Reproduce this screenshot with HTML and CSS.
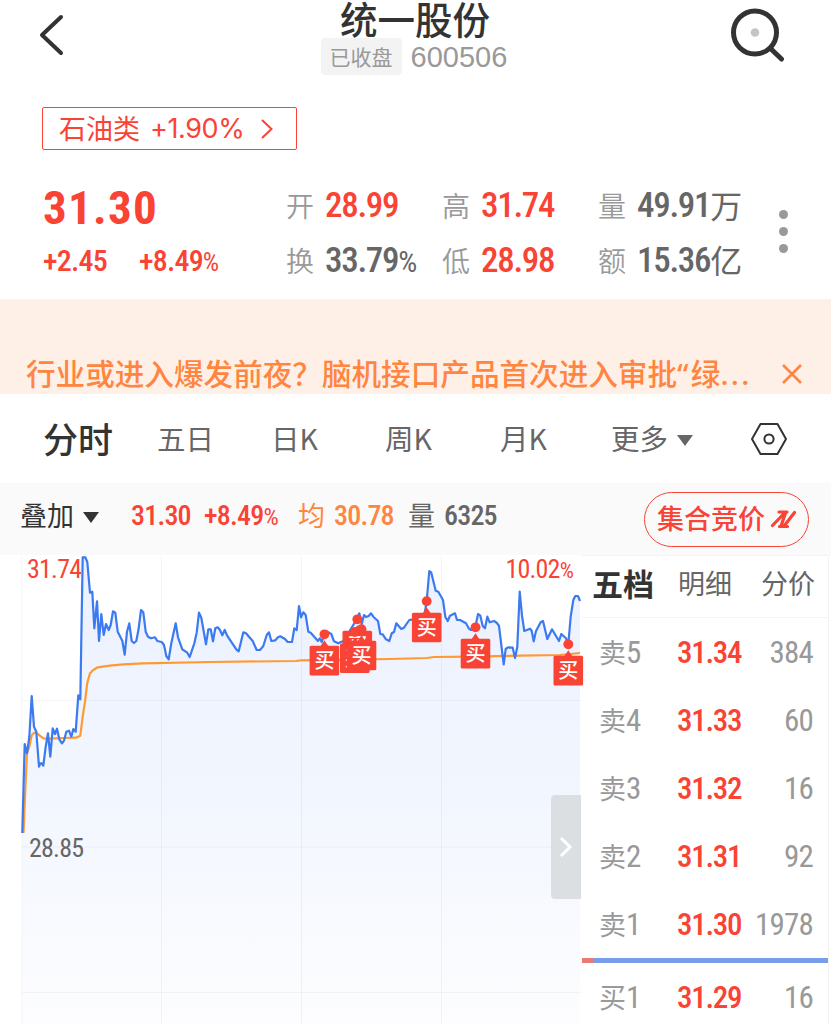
FILE: index.html
```html
<!DOCTYPE html>
<html lang="zh-CN">
<head>
    <meta charset="UTF-8">
    <meta name="viewport" content="width=device-width, initial-scale=1.0">
    <title>统一股份 600506</title>
    <link rel="stylesheet" href="styles.css">
</head>
<body>

    <!-- Header -->
    <header class="header">
        <svg class="back-icon" width="30" height="46" viewBox="0 0 30 46">
            <path d="M24 5 L5 23 L24 41" />
        </svg>
        <div class="stock-title">
            <h1>统一股份</h1>
            <div class="stock-sub">
                <span class="status-badge">已收盘</span>
                <span class="stock-code">600506</span>
            </div>
        </div>
        <svg class="search-icon" width="60" height="60" viewBox="0 0 60 60">
            <circle class="ring" cx="30" cy="29.5" r="21.5" />
            <path d="M46 46 L56.5 56" />
            <circle class="dot" cx="30" cy="29.5" r="4.3" />
        </svg>
    </header>

    <!-- Sector -->
    <div class="sector">
        <a class="sector-tag">
            <span class="sector-name">石油类</span>
            <span class="sector-rate">+1.90%</span>
            <svg width="14" height="20" viewBox="0 0 14 20"><path d="M2 1 L11.5 10 L2 19" /></svg>
        </a>
    </div>

    <!-- Quote -->
    <section class="quote">
        <div class="quote-price">
            <div class="num price">31.30</div>
            <div class="change"><span class="num">+2.45</span><span class="num">+8.49<span class="pct">%</span></span></div>
        </div>
        <div class="quote-grid">
            <div class="cell"><label>开</label><span class="num up">28.99</span></div>
            <div class="cell"><label>高</label><span class="num up">31.74</span></div>
            <div class="cell"><label>量</label><span class="num">49.91</span><span class="unit">万</span></div>
            <div class="cell"><label>换</label><span class="num">33.79<span class="pct">%</span></span></div>
            <div class="cell"><label>低</label><span class="num up">28.98</span></div>
            <div class="cell"><label>额</label><span class="num">15.36</span><span class="unit">亿</span></div>
        </div>
        <div class="more-dots"><i></i><i></i><i></i></div>
    </section>

    <!-- Notice -->
    <div class="notice">
        <span class="notice-text">行业或进入爆发前夜？脑机接口产品首次进入审批<span class="punct">“</span>绿<span class="punct">...</span></span>
        <svg width="20" height="20" viewBox="0 0 20 20"><path d="M1 1 L19 19 M19 1 L1 19" /></svg>
    </div>

    <!-- Period tabs -->
    <nav class="tabs">
        <span class="tab active">分时</span>
        <span class="tab">五日</span>
        <span class="tab">日K</span>
        <span class="tab">周K</span>
        <span class="tab">月K</span>
        <span class="tab">更多<i class="caret"></i></span>
        <svg width="38" height="34" viewBox="0 0 38 34">
            <path d="M10.5 2 H27.5 L36 17 L27.5 32 H10.5 L2 17 Z" />
            <circle cx="19" cy="17" r="4.6" />
        </svg>
    </nav>

    <!-- Indicator bar -->
    <div class="indicator">
        <span class="overlay-btn">叠加<i class="caret"></i></span>
        <span class="num up last">31.30</span>
        <span class="num up rate">+8.49<span class="pct">%</span></span>
        <span class="avg-label">均</span>
        <span class="num avg">30.78</span>
        <span class="vol-label">量</span>
        <span class="num vol">6325</span>
        <a class="auction-btn"><span>集合竞价</span>
            <svg width="26" height="20" viewBox="0 0 26 20">
                <path d="M2.5 16.5 L15 3.5 M9 3 H17 M15.5 4 L11 17 M9.5 17.5 H17.5 M14.5 16.5 L24.5 3.5" />
            </svg>
        </a>
    </div>

    <main class="main">
        <!-- Intraday chart -->
        <div class="chart">
            <svg width="584" height="469" viewBox="0 555 584 469">
                <defs>
                    <linearGradient id="area" x1="0" y1="556" x2="0" y2="1024" gradientUnits="userSpaceOnUse">
                        <stop offset="0" stop-color="#ebf1fe" />
                        <stop offset="0.5" stop-color="#f2f6fe" />
                        <stop offset="1" stop-color="#fdfdff" />
                    </linearGradient>
                    <g id="buy">
                        <circle r="4.9" />
                        <path d="M-4 12 L0 6 L4 12 Z" />
                        <rect x="-14.8" y="11.5" width="29.6" height="29.6" rx="1.5" />
                        <text y="33.5">买</text>
                    </g>
                </defs>
                <path class="price-area" id="priceArea" />
                <path class="grid-line" d="M22 556 V1024 M161.5 556 V1024 M301.5 556 V1024 M441.5 556 V1024 M22 700.5 H582 M22 847 H582 M22 992.5 H582" />
                <path class="avg-line" d="M23.5 833 L25.5 785 27 753 29.3 746.7 31.7 735 34.3 732.7 37 733.3 43.3 738.3 50 738.7 63.3 738 76 737.7 80.3 735.7 82.7 716.7 85 701.7 87.3 682.7 90 673.3 93.3 670 97.7 667.3 110 665.7 123.3 664.3 143 663.3 210 662 296 661 301 660.3 390 659 427 658 434 657 470 656.7 520 655.7 560 655 580 653" />
                <path class="price-line" id="priceLine" />
                <g class="buys">
                    <use href="#buy" x="324.4" y="634.3" />
                    <use href="#buy" x="357.3" y="619.3" />
                    <use href="#buy" x="354.8" y="632" />
                    <use href="#buy" x="361.5" y="629.2" />
                    <use href="#buy" x="426.7" y="601.2" />
                    <use href="#buy" x="475.5" y="627.3" />
                    <use href="#buy" x="568.3" y="644.3" />
                </g>
            </svg>
            <span class="num up label-high">31.74</span>
            <span class="num up label-rate">10.02<span class="pct">%</span></span>
            <span class="num label-base">28.85</span>
            <div class="drawer-handle">
                <svg width="14" height="22" viewBox="0 0 14 22"><path d="M2 2 L11 11 L2 20" /></svg>
            </div>
        </div>

        <!-- Order book -->
        <aside class="book">
            <div class="book-tabs"><span class="active">五档</span><span>明细</span><span>分价</span></div>
            <div class="row"><span class="level">卖<b class="num">5</b></span><span class="num up">31.34</span><span class="num qty">384</span></div>
            <div class="row"><span class="level">卖<b class="num">4</b></span><span class="num up">31.33</span><span class="num qty">60</span></div>
            <div class="row"><span class="level">卖<b class="num">3</b></span><span class="num up">31.32</span><span class="num qty">16</span></div>
            <div class="row"><span class="level">卖<b class="num">2</b></span><span class="num up">31.31</span><span class="num qty">92</span></div>
            <div class="row"><span class="level">卖<b class="num">1</b></span><span class="num up">31.30</span><span class="num qty">1978</span></div>
            <div class="ratio-bar"><i></i></div>
            <div class="row"><span class="level">买<b class="num">1</b></span><span class="num up">31.29</span><span class="num qty">16</span></div>
        </aside>
    </main>

    <script>
        // Price points, x y pairs
        const points = '22.3 833 24.7 744 27 753.3 29.3 737 31.7 696 34 726.7 36.3 731.7 39 766.7 40.3 763.3 41.7 763.3 43.3 765.7 45.7 746.7 48 733.3 50.3 756.7 52.7 728.3 55 734 57 728.7 59.3 739.3 62 743.3 64 740.7 66.3 731.7 69 730.7 71.3 736.7 73.3 729 75.7 731.7 78.3 695.3 80.3 699.3 82.7 557.3 85.3 557.3 87.3 562 90 592.7 92.3 591.7 94.3 628.3 97 601.3 99 641 101.3 614 103.7 635 106 624 108.7 630 110.7 625 113 611.3 115.3 612.7 117.7 631.7 122.3 640.7 124.7 654.7 127 631.7 129.3 623.3 131.7 641 134 643 136.3 641 138.7 628.3 141 610 143.3 612.3 145.7 631.7 148 636.7 151 638.3 155 637.3 157.3 641 161.7 642 164 645 166.3 656 168.7 659.3 171.3 643.3 175.7 623.3 178 637.3 182.3 649.3 187.3 652.7 189.7 657 194.3 643.3 196.7 632.7 199 612.7 201.3 617.7 206 644.3 208.3 629.3 210.7 629.3 213 641.3 215.3 628.3 217.7 627.3 220 630 222.3 635.3 224.7 630 227 635.3 236.3 649.3 238.7 651.3 243.3 632.3 246 633.3 252.7 641 256.7 650 260 650 263.3 646 266.7 635 269 632.3 271.3 641 275.3 640.3 278 637.3 280.3 636.3 285 639 287.7 642 292 642 294.3 628.3 296.7 630 299 606 301 617.3 303.3 612.3 305.7 615 308.3 631.7 310.7 632.7 318 641 319.7 638.3 321.7 642 324 635 327.3 631.7 331.3 634 334 641.3 338.3 643.3 343.3 641 348.3 633.3 356.7 619.3 359.3 613.3 361.7 624 364 615 366 617 368.7 616 371 613.3 373.3 616.7 378 621 380.3 634 382.7 634.3 386 639.3 389.3 641 391.7 633.3 394 632 396.3 623.3 401.3 629 404 627.7 409.3 620 413.3 619.3 424 618 426.7 601 429.3 571 431.3 572.7 435.7 590.7 438.3 591.7 443 600 445.3 616.7 447.7 621 450 615.7 455 613.3 457 620 460 620 466 623.3 468.7 628.3 471 630 475.3 627.3 478 614 480.3 615.7 482.7 626 485 628.3 487.3 616.7 489.7 622.3 494 621 496.7 622.7 499 626 503.7 664.3 505.7 649 508 647.3 512.7 647.7 515 658 517.3 646.7 519.7 591.7 522 615.7 524.3 631 530 628.7 531.7 631 533.7 641.3 536 631 540.7 622.3 543 621 547.3 639 552 629.3 559 641 561.3 634 566 638.3 568.3 644 570.7 616.7 573.3 600 575.3 596 578 596 580 601';

        document.getElementById('priceLine').setAttribute('d', 'M' + points);
        document.getElementById('priceArea').setAttribute('d', 'M' + points + ' V1024 H22.3 Z');
    </script>

</body>
</html>
```
FILE: styles.css
```css
* {
    box-sizing: border-box;
}

body {
    margin: 0;
    width: 831px;
    height: 1024px;
    overflow: hidden;
    background: #ffffff;
    color: #666666;
    font-family: "Noto Sans CJK SC", sans-serif;
    white-space: nowrap;
}

svg {
    display: block;
    fill: none;
}

i {
    display: block;
}

.num {
    font-family: Roboto, sans-serif;
    font-weight: 500;
    font-stretch: 75%;
    letter-spacing: -0.8px;
}

.pct {
    font-size: 0.86em;
    font-weight: 400;
}

.up {
    color: #f94335;
}

.caret {
    display: inline-block;
    border: 8px solid transparent;
    border-top: 11px solid currentColor;
    border-bottom: 0;
}

/* Header */
.header {
    display: flex;
    justify-content: space-between;
    height: 107px;
    padding: 0 46px 0 37px;
}

.back-icon {
    margin-top: 12px;
    stroke: #333333;
    stroke-width: 4;
    stroke-linecap: round;
    stroke-linejoin: round;
}

.stock-title {
    width: 190px;
    margin-left: 39px;
}

.stock-title h1 {
    margin: 0 1px 0 0;
    height: 38px;
    font-size: 37.5px;
    line-height: 36px;
    font-weight: 500;
    color: #333333;
    text-align: center;
}

.stock-sub {
    display: flex;
    align-items: flex-start;
    gap: 9px;
    color: #999999;
}

.status-badge {
    width: 81px;
    height: 37px;
    border-radius: 4px;
    background: #f3f3f3;
    font-size: 21px;
    line-height: 36px;
    text-align: center;
}

.stock-code {
    font-family: "Liberation Sans", sans-serif;
    font-size: 29px;
    line-height: 39px;
}

.search-icon {
    margin-top: 3px;
    stroke: #333333;
    stroke-width: 5;
    stroke-linecap: round;
}

.search-icon .dot {
    fill: #c4c4c4;
    stroke: none;
}

/* Sector */
.sector {
    height: 79px;
    padding-left: 42px;
}

.sector-tag {
    display: flex;
    align-items: center;
    width: 255px;
    height: 43px;
    padding-left: 16px;
    border: 1.5px solid #f94335;
    border-radius: 2px;
    color: #f94335;
    font-size: 27px;
    line-height: 38px;
}

.sector-name {
    margin-top: -2px;
}

.sector-rate {
    margin-left: 10px;
    font-family: Inter, sans-serif;
    font-size: 27px;
    letter-spacing: -0.4px;
}

.sector-tag svg {
    margin-left: 16px;
    stroke: #f94335;
    stroke-width: 2;
}

/* Quote */
.quote {
    display: flex;
    height: 113px;
    padding-left: 43px;
}

.quote-price {
    width: 243px;
    color: #f94335;
}

.price {
    height: 48px;
    font-size: 47px;
    line-height: 43px;
    font-weight: 700;
    letter-spacing: 1.3px;
}

.change {
    display: flex;
    gap: 32px;
    font-size: 30px;
    line-height: 53px;
}

.quote-grid {
    display: grid;
    grid-template-columns: 156px 156px 156px;
    grid-template-rows: 40px 40px;
    row-gap: 15px;
}

.cell {
    display: flex;
    align-items: center;
    font-size: 35px;
    line-height: 40px;
}

.cell .num {
    letter-spacing: -1.3px;
}

.cell label {
    width: 39px;
    margin-top: -2px;
    color: #999999;
    font-size: 28px;
    font-weight: 350;
}

.cell .unit {
    margin-top: -4px;
    font-size: 32px;
}

.more-dots {
    display: flex;
    flex-direction: column;
    gap: 8px;
    margin: 24px 0 0 25px;
}

.more-dots i {
    width: 9px;
    height: 9px;
    border-radius: 50%;
    background: #999999;
}

/* Notice */
.notice {
    display: flex;
    justify-content: space-between;
    height: 95px;
    padding: 54px 29px 0 26px;
    background: #fff0e7;
    color: #ff8540;
    font-size: 29.6px;
    line-height: 40px;
}

.notice-text {
    font-weight: 500;
}

.punct {
    font-family: "Noto Sans", sans-serif;
    letter-spacing: 2.4px;
}

.notice svg {
    margin-top: 11px;
    stroke: #ff8540;
    stroke-width: 2.6;
}

/* Period tabs */
.tabs {
    display: grid;
    grid-template-columns: 114px 114px 114px 115px 111px 139px 38px;
    align-items: center;
    height: 89px;
    padding-left: 43px;
    font-size: 28.5px;
}

.tab {
    margin-top: -2px;
}

.tab.active {
    color: #333333;
    font-size: 35px;
    font-weight: 500;
}

.tab .caret {
    margin: 0 0 4px 9px;
}

.tabs svg {
    stroke: #333333;
    stroke-width: 2;
    stroke-linejoin: round;
}

/* Indicator bar */
.indicator {
    display: flex;
    align-items: center;
    height: 72px;
    padding: 0 22px 7px 20px;
    background: #fafafa;
    font-size: 28px;
}

.overlay-btn {
    width: 111px;
    margin-top: -2px;
    color: #333333;
    font-size: 27px;
}

.overlay-btn .caret {
    margin: 0 0 3px 9px;
}

.last {
    width: 73px;
}

.rate {
    width: 94px;
}

.avg-label,
.avg {
    color: #ff8540;
}

.avg-label,
.vol-label {
    width: 36px;
    margin-top: -2px;
    font-size: 27px;
}

.avg {
    width: 74px;
}

.auction-btn {
    display: flex;
    align-items: center;
    width: 165px;
    height: 55px;
    margin: 7px 0 0 auto;
    padding-left: 12px;
    border: 1.5px solid #f94335;
    border-radius: 28px;
    color: #f94335;
    font-size: 27px;
    line-height: 40px;
    font-weight: 500;
}

.auction-btn span {
    margin-top: -3px;
}

.auction-btn svg {
    margin-left: 5px;
    stroke: #f94335;
    stroke-width: 3.2;
    stroke-linecap: round;
}

/* Intraday chart */
.main {
    display: flex;
}

.chart {
    position: relative;
    z-index: 1;
    width: 582px;
    height: 469px;
    font-size: 26px;
}

.price-area {
    fill: url(#area);
}

.price-line {
    stroke: #3b7af0;
    stroke-width: 2.2;
    stroke-linejoin: round;
}

.avg-line {
    stroke: #ff9a33;
    stroke-width: 2.2;
    stroke-linejoin: round;
}

.grid-line {
    stroke: #000000;
    stroke-opacity: 0.04;
}

.buys {
    fill: #f94335;
}

#buy text {
    fill: #ffffff;
    font-size: 20px;
    font-weight: 500;
    text-anchor: middle;
}

.label-high,
.label-rate,
.label-base {
    position: absolute;
    line-height: 30px;
    font-weight: 450;
}

.label-high {
    left: 27px;
    top: -1px;
}

.label-rate {
    right: 9px;
    top: -1px;
}

.label-base {
    left: 29px;
    top: 278px;
}

.drawer-handle {
    position: absolute;
    right: 1px;
    top: 240px;
    display: flex;
    align-items: center;
    justify-content: center;
    width: 30px;
    height: 104px;
    border-radius: 4px 0 0 4px;
    background: #dcdfe2;
}

.drawer-handle svg {
    stroke: #ffffff;
    stroke-width: 3;
}

/* Order book */
.book {
    width: 247px;
    height: 469px;
    border-right: 1px solid #f3f3f3;
    border-top: 1px solid #f3f3f3;
}

.book-tabs {
    display: grid;
    grid-template-columns: 86px 83px 60px;
    align-items: center;
    height: 62px;
    padding: 0 0 9px 10px;
    border-bottom: 1px solid #f3f3f3;
    font-size: 27px;
}

.book-tabs .active {
    color: #333333;
    font-size: 31px;
    font-weight: 700;
}

.row {
    display: grid;
    grid-template-columns: 78px 68px 68px;
    align-items: center;
    height: 68px;
    padding-left: 17px;
    font-size: 31px;
}

.row .up {
    letter-spacing: -1.3px;
}

.level {
    margin-top: -2px;
    color: #999999;
    font-size: 27px;
}

.level .num {
    font-size: 31px;
    font-weight: 450;
}

.qty {
    color: #999999;
    font-weight: 450;
    text-align: right;
}

.ratio-bar {
    height: 5px;
    background: #799de8;
}

.ratio-bar i {
    width: 12px;
    height: 5px;
    background: #e87b74;
}
```
